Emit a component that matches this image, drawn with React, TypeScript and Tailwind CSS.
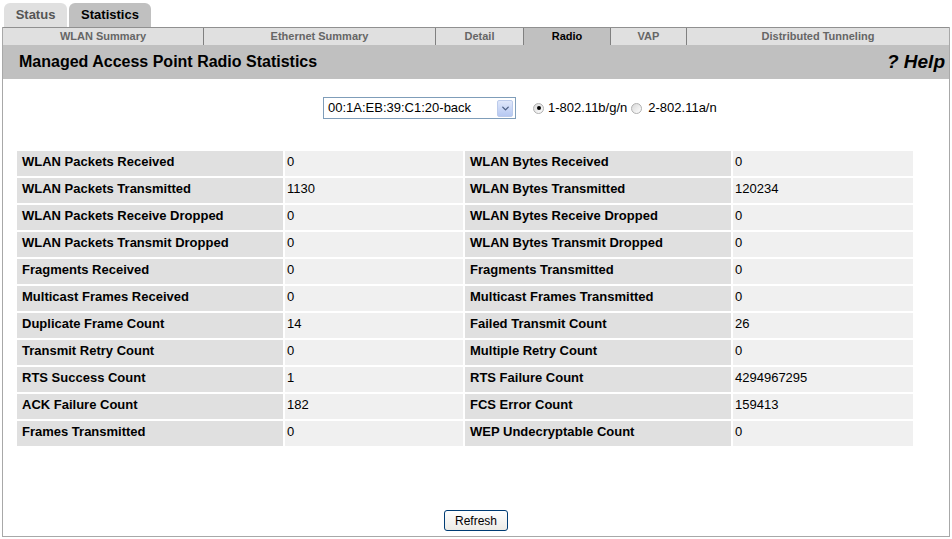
import { ChevronDown } from 'lucide-react';

const rows: [string, string, string, string][] = [
  ['WLAN Packets Received', '0', 'WLAN Bytes Received', '0'],
  ['WLAN Packets Transmitted', '1130', 'WLAN Bytes Transmitted', '120234'],
  ['WLAN Packets Receive Dropped', '0', 'WLAN Bytes Receive Dropped', '0'],
  ['WLAN Packets Transmit Dropped', '0', 'WLAN Bytes Transmit Dropped', '0'],
  ['Fragments Received', '0', 'Fragments Transmitted', '0'],
  ['Multicast Frames Received', '0', 'Multicast Frames Transmitted', '0'],
  ['Duplicate Frame Count', '14', 'Failed Transmit Count', '26'],
  ['Transmit Retry Count', '0', 'Multiple Retry Count', '0'],
  ['RTS Success Count', '1', 'RTS Failure Count', '4294967295'],
  ['ACK Failure Count', '182', 'FCS Error Count', '159413'],
  ['Frames Transmitted', '0', 'WEP Undecryptable Count', '0'],
];

const subTabs = [
  { label: 'WLAN Summary', w: 'w-[200px]' },
  { label: 'Ethernet Summary', w: 'w-[232px]' },
  { label: 'Detail', w: 'w-[88px]' },
  { label: 'Radio', w: 'w-[87px]', active: true },
  { label: 'VAP', w: 'w-[76px]' },
  { label: 'Distributed Tunneling', w: 'flex-1' },
];

function Radio({ checked }: { checked?: boolean }) {
  return (
    <span className="w-[11px] h-[11px] rounded-full border border-[#b0b0b0] bg-gradient-to-br from-[#d8d8d8] to-white flex items-center justify-center">
      {checked && <span className="w-[4px] h-[4px] rounded-full bg-black" />}
    </span>
  );
}

export default function App() {
  return (
    <div className="w-[952px] h-[539px] bg-white font-['Liberation_Sans',Arial,sans-serif] overflow-hidden">
      {/* top tabs */}
      <div className="flex items-end h-[27px] pl-[4px] gap-[2px]">
        <div className="w-[63px] h-[24px] rounded-t-[6px] bg-[#e0e0e0] text-[#555] text-[13px] font-bold flex items-center justify-center">
          Status
        </div>
        <div className="w-[82px] h-[24px] rounded-t-[6px] bg-[#c0c0c0] text-black text-[13px] font-bold flex items-center justify-center">
          Statistics
        </div>
      </div>

      <div className="mx-[2px] w-[948px] h-[510px] border-l border-r border-b border-[#a8a8a8] flex flex-col">
        {/* sub tabs */}
        <div className="flex h-[18px] border-t border-[#909090] bg-[#e0e0e0]">
          {subTabs.map((t, i) => (
            <div
              key={t.label}
              className={`${t.w} ${i > 0 ? 'border-l border-[#808080]' : ''} ${t.active ? 'bg-[#c0c0c0] text-black' : 'text-[#666]'} text-[11px] font-bold flex items-center justify-center`}
            >
              {t.label}
            </div>
          ))}
        </div>

        {/* header */}
        <div className="h-[34px] bg-[#c0c0c0] flex items-center justify-between pl-[16px] pr-[4px]">
          <span className="text-[16px] font-bold text-black">Managed Access Point Radio Statistics</span>
          <span className="text-[19px] font-bold italic text-black">? Help</span>
        </div>

        {/* selector */}
        <div className="flex items-center h-[22px] mt-[18px] text-[13px] text-black pl-[320px]">
          <div className="w-[193px] h-[22px] border border-[#7f9db9] flex items-center justify-between pl-[4px] pr-[2px]">
            <span>00:1A:EB:39:C1:20-back</span>
            <span className="w-[16px] h-[17px] rounded-[2px] bg-gradient-to-b from-[#e0e8fa] to-[#b6c8f2] border border-[#bccbeb] flex items-center justify-center">
              <ChevronDown size={11} strokeWidth={3} className="text-[#4d6185]" />
            </span>
          </div>
          <div className="flex items-center ml-[17px] gap-[4px]">
            <Radio checked />
            <span>1-802.11b/g/n</span>
          </div>
          <div className="flex items-center ml-[4px] gap-[6px]">
            <Radio />
            <span>2-802.11a/n</span>
          </div>
        </div>

        {/* stats table */}
        <div className="mt-[32px] ml-[14px] w-[896px] flex flex-col gap-[2px]">
          {rows.map((r) => (
            <div key={r[0]} className="flex gap-[2px] h-[25px] text-[13px] text-black">
              <div className="w-[266px] bg-[#e0e0e0] font-bold pl-[5px] pt-[1px]">{r[0]}</div>
              <div className="w-[178px] bg-[#f0f0f0] pl-[2px] pt-[1px]">{r[1]}</div>
              <div className="w-[266px] bg-[#e0e0e0] font-bold pl-[5px] pt-[1px]">{r[2]}</div>
              <div className="flex-1 bg-[#f0f0f0] pl-[2px] pt-[1px]">{r[3]}</div>
            </div>
          ))}
        </div>

        <div className="flex-1" />
        <div className="flex justify-center pb-[5px]">
          <button className="w-[64px] h-[21px] rounded-[3px] border border-[#003c74] bg-gradient-to-b from-white to-[#ecebe6] text-[12px] text-black">
            Refresh
          </button>
        </div>
      </div>
    </div>
  );
}
